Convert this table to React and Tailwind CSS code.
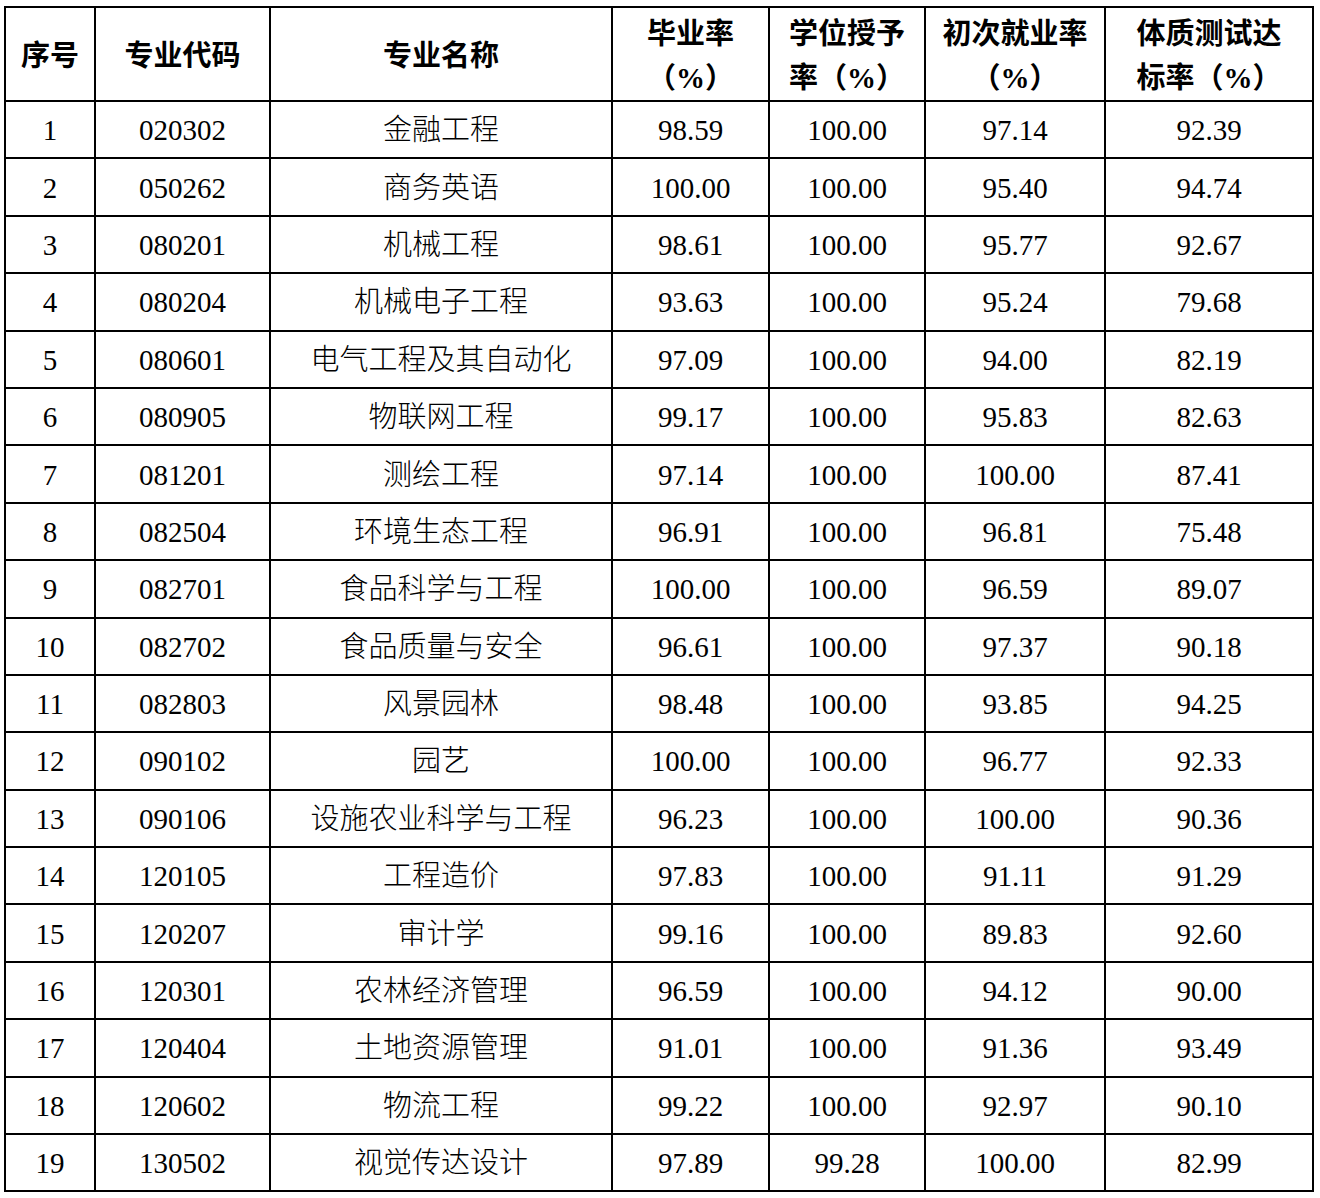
const rows = [
  ["1", "020302", "金融工程", "98.59", "100.00", "97.14", "92.39"],
  ["2", "050262", "商务英语", "100.00", "100.00", "95.40", "94.74"],
  ["3", "080201", "机械工程", "98.61", "100.00", "95.77", "92.67"],
  ["4", "080204", "机械电子工程", "93.63", "100.00", "95.24", "79.68"],
  ["5", "080601", "电气工程及其自动化", "97.09", "100.00", "94.00", "82.19"],
  ["6", "080905", "物联网工程", "99.17", "100.00", "95.83", "82.63"],
  ["7", "081201", "测绘工程", "97.14", "100.00", "100.00", "87.41"],
  ["8", "082504", "环境生态工程", "96.91", "100.00", "96.81", "75.48"],
  ["9", "082701", "食品科学与工程", "100.00", "100.00", "96.59", "89.07"],
  ["10", "082702", "食品质量与安全", "96.61", "100.00", "97.37", "90.18"],
  ["11", "082803", "风景园林", "98.48", "100.00", "93.85", "94.25"],
  ["12", "090102", "园艺", "100.00", "100.00", "96.77", "92.33"],
  ["13", "090106", "设施农业科学与工程", "96.23", "100.00", "100.00", "90.36"],
  ["14", "120105", "工程造价", "97.83", "100.00", "91.11", "91.29"],
  ["15", "120207", "审计学", "99.16", "100.00", "89.83", "92.60"],
  ["16", "120301", "农林经济管理", "96.59", "100.00", "94.12", "90.00"],
  ["17", "120404", "土地资源管理", "91.01", "100.00", "91.36", "93.49"],
  ["18", "120602", "物流工程", "99.22", "100.00", "92.97", "90.10"],
  ["19", "130502", "视觉传达设计", "97.89", "99.28", "100.00", "82.99"],
];

const headers = [
  ["序号"],
  ["专业代码"],
  ["专业名称"],
  ["毕业率", "（%）"],
  ["学位授予", "率（%）"],
  ["初次就业率", "（%）"],
  ["体质测试达", "标率（%）"],
];

const widths = ["w-[90px]", "w-[175px]", "w-[342px]", "w-[157px]", "w-[156px]", "w-[180px]", "w-[208px]"];

export default function App() {
  return (
    <div className="bg-white min-h-[1198px] pt-[6px] pl-[4px]">
      <table className="table-fixed border-collapse w-[1310px] text-black text-[29px] font-['Liberation_Serif','Noto_Sans_CJK_SC',serif]">
        <colgroup>
          {widths.map((w, i) => (
            <col key={i} className={w} />
          ))}
        </colgroup>
        <thead>
          <tr className="h-[93px]">
            {headers.map((h, i) => (
              <th
                key={i}
                className="border-2 border-black p-0 pt-[4px] text-center align-middle font-bold leading-[44px]"
              >
                {h.map((line, j) => (
                  <div key={j}>{line}</div>
                ))}
              </th>
            ))}
          </tr>
        </thead>
        <tbody>
          {rows.map((r) => (
            <tr key={r[0]} className="h-[57.4px]">
              {r.map((cell, i) => (
                <td
                  key={i}
                  className={
                    "border-2 border-black p-0 pt-[2px] text-center align-middle leading-none " +
                    (i === 2 ? "font-light" : "font-normal")
                  }
                >
                  {cell}
                </td>
              ))}
            </tr>
          ))}
        </tbody>
      </table>
    </div>
  );
}
